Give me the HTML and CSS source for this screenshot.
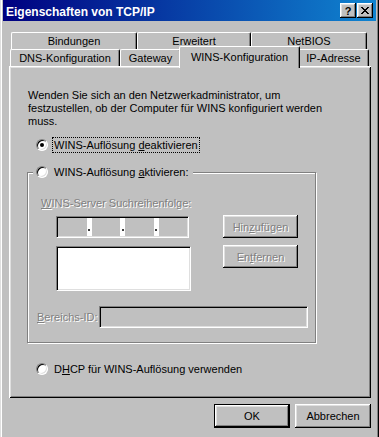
FILE: index.html
```html
<!DOCTYPE html>
<html lang="de">
<head>
<meta charset="utf-8">
<title>Eigenschaften von TCP/IP</title>
<link rel="stylesheet" href="styles.css">
</head>
<body>
<div class="window">
  <div class="titlebar">
    <span class="title">Eigenschaften von TCP/IP</span>
    <div class="tbtns">
      <span class="tbtn help">?</span>
      <span class="tbtn close">
        <svg width="8" height="7" viewBox="0 0 8 7" shape-rendering="crispEdges"><path d="M0 0h2v1h-2zM6 0h2v1h-2zM1 1h2v1h-2zM5 1h2v1h-2zM2 2h4v1h-4zM3 3h2v1h-2zM2 4h4v1h-4zM1 5h2v1h-2zM5 5h2v1h-2zM0 6h2v1h-2zM6 6h2v1h-2z" fill="#000"/></svg>
      </span>
    </div>
  </div>
  <div class="body">
    <div class="tabrow back">
      <div class="tab w-bind">Bindungen</div>
      <div class="tab w-erw">Erweitert</div>
      <div class="tab w-net">NetBIOS</div>
    </div>
    <div class="tabrow front">
      <div class="tab w-dns">DNS-Konfiguration</div>
      <div class="tab w-gw">Gateway</div>
      <div class="tab active">WINS-Konfiguration</div>
      <div class="tab w-ip">IP-Adresse</div>
    </div>
    <div class="panel">
      <div class="intro">Wenden Sie sich an den Netzwerkadministrator, um<br>festzustellen, ob der Computer für WINS konfiguriert werden<br>muss.</div>
      <div class="opt first">
        <span class="radio on"></span>
        <span class="lbl focus">WINS-Auflösung <u>d</u>eaktivieren</span>
      </div>
      <div class="group">
        <div class="legend">
          <span class="radio"></span>
          <span class="lbl">WINS-Auflösung <u>a</u>ktivieren:</span>
        </div>
        <div class="glabel disabled"><u>W</u>INS-Server Suchreihenfolge:</div>
        <div class="servers">
          <div class="servers-left">
            <div class="ip">
              <span class="seg"></span><span class="sep"><i class="dot"></i></span>
              <span class="seg"></span><span class="sep"><i class="dot"></i></span>
              <span class="seg"></span><span class="sep"><i class="dot"></i></span>
              <span class="seg"></span>
            </div>
            <div class="list"></div>
          </div>
          <div class="servers-right">
            <div class="btn small disabled">Hin<u>z</u>ufügen</div>
            <div class="btn small disabled">En<u>t</u>fernen</div>
          </div>
        </div>
        <div class="scope">
          <span class="scope-label disabled"><u>B</u>ereichs-ID:</span>
          <span class="field"></span>
        </div>
      </div>
      <div class="opt dhcp">
        <span class="radio"></span>
        <span class="lbl">D<u>H</u>CP für WINS-Auflösung verwenden</span>
      </div>
    </div>
    <div class="actions">
      <div class="btn big default">OK</div>
      <div class="btn big">Abbrechen</div>
    </div>
  </div>
</div>
</body>
</html>
```
FILE: styles.css
```css
html, body {
  margin: 0;
  padding: 0;
  background: #c0c0c0;
}
body {
  font-family: "Liberation Sans", Arial, sans-serif;
  font-size: 11px;
  color: #000;
}
u { text-decoration: underline; text-underline-offset: 1px; }

.window {
  width: 379px;
  height: 437px;
  box-sizing: border-box;
  padding: 0 3px;
  background: #c0c0c0;
  overflow: hidden;
  box-shadow: inset 1px 0 #dfdfdf, inset 2px 0 #fff, inset -1px 0 #000, inset -2px 0 #808080;
}

.titlebar {
  height: 21px;
  box-sizing: border-box;
  padding: 0 3px;
  display: flex;
  align-items: center;
  justify-content: space-between;
  background: linear-gradient(to right, #000080, #1084d0);
}
.title {
  color: #fff;
  font-weight: bold;
  font-size: 12px;
  line-height: 14px;
  padding-top: 2px;
  white-space: nowrap;
}
.tbtns {
  display: flex;
  gap: 1px;
}
.tbtn {
  width: 16px;
  height: 15px;
  box-sizing: border-box;
  display: flex;
  align-items: center;
  justify-content: center;
  background: #c0c0c0;
  box-shadow: inset -1px -1px #000, inset 1px 1px #fff, inset -2px -2px #808080, inset 2px 2px #dfdfdf;
  font-weight: bold;
  font-size: 11px;
  line-height: 11px;
}
.tbtn.help { padding-top: 1px; }

.body {
  padding: 11px 5px 0 6px;
}

.tabrow {
  display: flex;
  align-items: flex-start;
  height: 17px;
}
.tabrow.back { margin-left: 2px; }
.tabrow.front { margin-left: 1px; }

.tab {
  box-sizing: border-box;
  height: 17px;
  padding-top: 2px;
  line-height: 13px;
  text-align: center;
  white-space: nowrap;
  background: #c0c0c0;
  border-top: 1px solid #fff;
  border-left: 1px solid #fff;
  border-right: 1px solid #000;
  border-radius: 2px 2px 0 0;
  box-shadow: inset -1px 0 #808080;
}
.w-bind { width: 126px; }
.w-erw { width: 114px; }
.w-net { width: 116px; }
.w-dns { width: 110px; }
.w-gw { width: 61px; }
.w-ip { width: 71px; }
.tab.active {
  width: 121px;
  height: 22px;
  padding-top: 4px;
  margin: -3px -2px -2px;
  position: relative;
  z-index: 1;
}

.panel {
  height: 332px;
  box-sizing: border-box;
  padding: 23px 0 0 18px;
  background: #c0c0c0;
  box-shadow: inset 1px 1px #fff, inset -1px -1px #000, inset 2px 2px #dfdfdf, inset -2px -2px #808080;
}

.intro {
  margin-left: 1px;
  line-height: 13px;
  white-space: nowrap;
}

.opt {
  display: flex;
  align-items: center;
  height: 16px;
  margin-left: 9px;
}
.opt.first { margin-top: 9px; }
.opt.dhcp { margin-top: 18px; }

.radio {
  flex: none;
  width: 12px;
  height: 12px;
  box-sizing: border-box;
  border-radius: 50%;
  background: #fff;
  border: 1px solid;
  border-color: #808080 #fff #fff #808080;
  box-shadow: inset 1px 1px #000, inset -1px -1px #dfdfdf;
  position: relative;
}
.radio.on::after {
  content: "";
  position: absolute;
  left: 3px;
  top: 3px;
  width: 4px;
  height: 4px;
  border-radius: 50%;
  background: #000;
}

.lbl {
  margin-left: 4px;
  padding: 0 1px;
  border: 1px solid transparent;
  line-height: 14px;
  white-space: nowrap;
}
.lbl.focus { border: 1px dotted #000; }

.group {
  margin-top: 19px;
  width: 289px;
  box-sizing: border-box;
  border: 1px solid #808080;
  box-shadow: inset 1px 1px #fff, 1px 1px #fff;
  padding-bottom: 14px;
}
.legend {
  display: flex;
  align-items: center;
  width: max-content;
  height: 16px;
  margin: -9px 0 0 5px;
  padding: 0 2px 0 3px;
  background: #c0c0c0;
}

.disabled {
  color: #808080;
  text-shadow: 1px 1px #fff;
}

.glabel {
  margin: 17px 0 0 13px;
  line-height: 13px;
  white-space: nowrap;
}

.servers {
  display: flex;
  margin: 6px 0 0 28px;
}
.servers-left {
  display: flex;
  flex-direction: column;
  gap: 8px;
  width: 135px;
}
.servers-right {
  display: flex;
  flex-direction: column;
  gap: 7px;
  margin: -1px 0 0 32px;
}

.sunken {
  border: 1px solid;
}
.ip, .list, .field {
  box-sizing: border-box;
  border: 1px solid;
  border-color: #808080 #fff #fff #808080;
  box-shadow: inset 1px 1px #000, inset -1px -1px #dfdfdf;
}
.ip {
  width: 133px;
  height: 22px;
  padding: 1px;
  display: flex;
  background: #c0c0c0;
}
.seg { flex: 1; }
.sep {
  flex: none;
  width: 5px;
  background: #fff;
  display: flex;
  justify-content: center;
  align-items: flex-start;
}
.dot {
  width: 2px;
  height: 2px;
  margin-top: 11px;
  background: #404040;
}
.list {
  width: 135px;
  height: 45px;
  background: #fff;
}

.scope {
  display: flex;
  align-items: center;
  margin: 15px 0 0 9px;
}
.scope-label {
  width: 62px;
  line-height: 13px;
  white-space: nowrap;
}
.field {
  width: 209px;
  height: 22px;
  background: #c0c0c0;
}

.btn {
  box-sizing: border-box;
  display: flex;
  align-items: center;
  justify-content: center;
  background: #c0c0c0;
  box-shadow: inset -1px -1px #000, inset 1px 1px #fff, inset -2px -2px #808080, inset 2px 2px #dfdfdf;
  white-space: nowrap;
}
.btn.small {
  width: 75px;
  height: 23px;
}
.btn.big {
  width: 76px;
  height: 24px;
}
.btn.default {
  border: 1px solid #000;
}

.actions {
  display: flex;
  justify-content: flex-end;
  gap: 5px;
  margin-top: 6px;
}
```
